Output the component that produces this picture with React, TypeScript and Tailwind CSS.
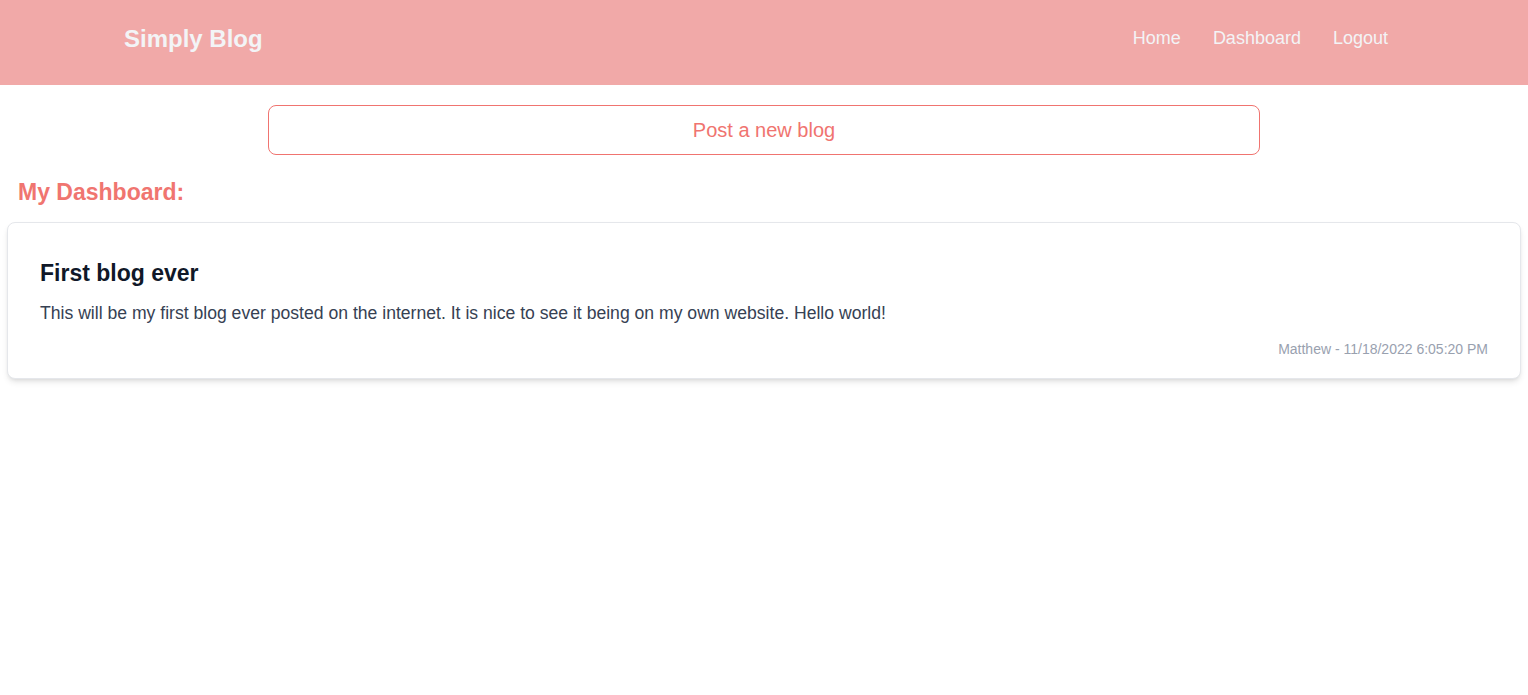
export default function App() {
  return (
    <div className="min-h-screen bg-white font-['Liberation_Sans',Arial,sans-serif]">
      <header className="flex h-[85px] items-center justify-between bg-[#f1a9a8] pb-2 pl-[124px] pr-[140px]">
        <h1 className="text-2xl font-bold text-gray-100">Simply Blog</h1>
        <nav className="flex gap-8 pb-[2px] text-lg text-gray-100">
          <a href="#">Home</a>
          <a href="#">Dashboard</a>
          <a href="#">Logout</a>
        </nav>
      </header>

      <main className="px-[7px] pt-5">
        <button className="mx-auto block h-[50px] w-[992px] rounded-lg border border-[#f07470] text-xl text-[#f07470]">
          Post a new blog
        </button>

        <h2 className="mt-[21px] px-[11px] text-[23px] font-bold leading-8 text-[#f07570]">
          My Dashboard:
        </h2>

        <div className="mt-[14px] rounded-lg border border-gray-200 bg-white px-8 pb-[19px] pt-[34px] shadow-md">
          <h3 className="text-[23px] font-bold leading-8 text-gray-900">First blog ever</h3>
          <p className="mt-[10px] text-[17.6px] leading-7 text-gray-700">
            This will be my first blog ever posted on the internet. It is nice to see it being on my own website. Hello world!
          </p>
          <p className="mt-[12px] text-right text-sm text-gray-400">
            Matthew - 11/18/2022 6:05:20 PM
          </p>
        </div>
      </main>
    </div>
  );
}
